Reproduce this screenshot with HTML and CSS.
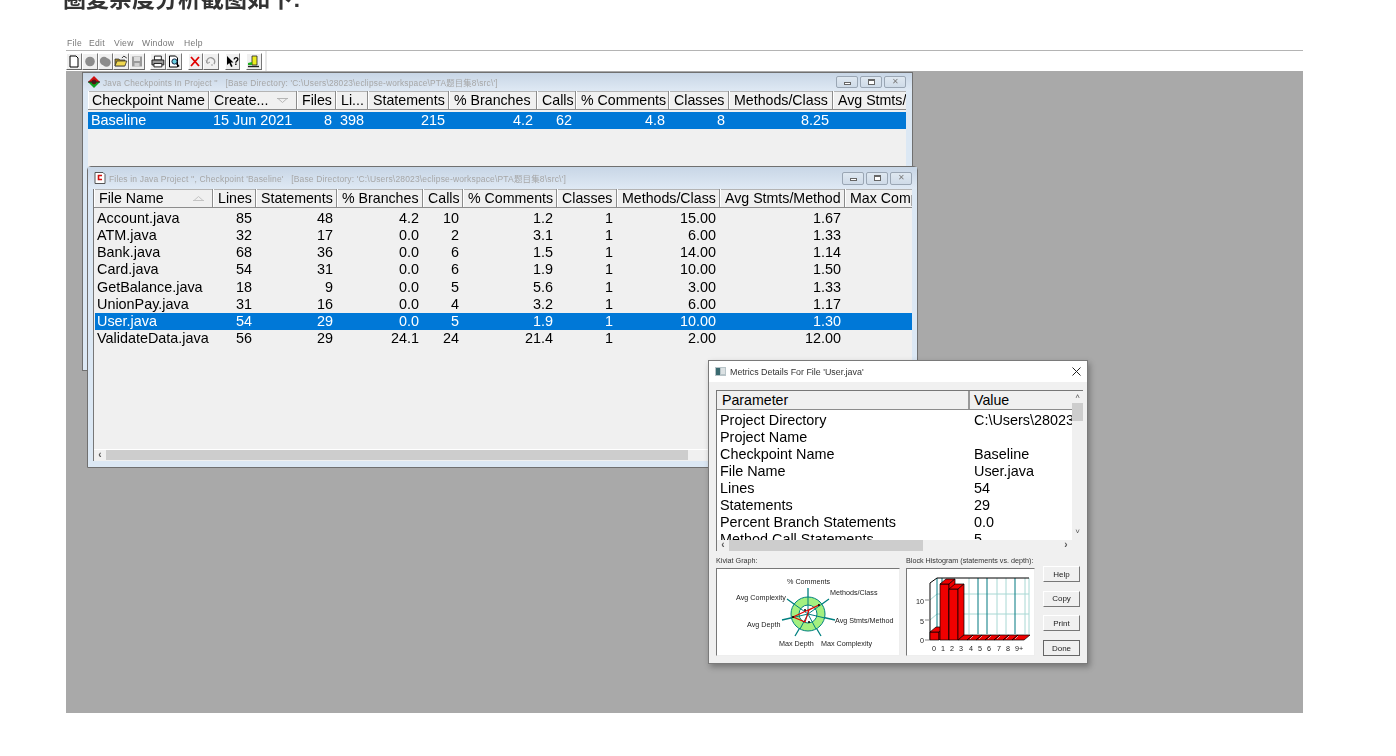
FILE: index.html
```html
<!DOCTYPE html>
<html lang="zh">
<head>
<meta charset="utf-8">
<title>圈复杂度分析</title>
<link rel="stylesheet" href="styles.css">
</head>
<body>
<main class="article">
  <h2 class="heading">圈复杂度分析截图如下:</h2>
  <figure class="shot">
    <nav class="menubar"><span>File</span><span>Edit</span><span>View</span><span>Window</span><span>Help</span></nav>
    <div class="toolbar">
      <div class="tgroup">
        <span class="tbtn"><svg viewBox="0 0 12 13" width="12" height="13"><path d="M2 1h6l2 2v9H2z" fill="#fff" stroke="#000"/></svg></span>
        <span class="tbtn"><svg viewBox="0 0 12 13" width="12" height="13"><circle cx="6" cy="6.5" r="4.8" fill="#8c8c8c"/></svg></span>
        <span class="tbtn"><svg viewBox="0 0 12 13" width="12" height="13"><circle cx="5" cy="6" r="4.2" fill="#8c8c8c"/><circle cx="7.5" cy="7.5" r="4.2" fill="#8c8c8c"/></svg></span>
        <span class="tbtn"><svg viewBox="0 0 14 13" width="14" height="13"><path d="M1 4h4l1 1h5v6H1z" fill="#a88a20" stroke="#333" stroke-width=".8"/><path d="M3 6h10l-2 5H1z" fill="#f0d850" stroke="#333" stroke-width=".8"/><path d="M8 3l2-2 3 2" fill="none" stroke="#333"/></svg></span>
        <span class="tbtn"><svg viewBox="0 0 12 13" width="12" height="13"><path d="M1 1.5h10v10H1z" fill="#9a9a9a"/><path d="M3 2h6v4H3z" fill="#dcdcdc"/><path d="M3.500 8h5v3.500h-5z" fill="#d0d0d0"/></svg></span>
      </div>
      <div class="tgroup">
        <span class="tbtn"><svg viewBox="0 0 14 13" width="14" height="13"><path d="M3.500 1h7v4h-7z" fill="#fff" stroke="#222"/><path d="M1 5h12v5H1z" fill="#9c9c9c" stroke="#222"/><path d="M3 8.500h8V12H3z" fill="#fff" stroke="#222"/></svg></span>
        <span class="tbtn"><svg viewBox="0 0 12 13" width="12" height="13"><path d="M1.500 1h6l2 2v9h-8z" fill="#fff" stroke="#000"/><circle cx="6.500" cy="6.500" r="2.600" fill="#6ad0e0" stroke="#124"/><path d="M8.500 8.500l2.500 3" stroke="#000" stroke-width="1.400"/></svg></span>
      </div>
      <div class="tgroup">
        <span class="tbtn"><svg viewBox="0 0 12 13" width="12" height="13"><path d="M2 2l8 9M10 2l-8 9" stroke="#e00000" stroke-width="1.800"/></svg></span>
        <span class="tbtn"><svg viewBox="0 0 12 13" width="12" height="13"><path d="M2 8a4 4 0 1 1 7 1" fill="none" stroke="#9a9a9a" stroke-width="1.400"/><path d="M1 5.500l1.500 3 2.500-1.500" fill="none" stroke="#9a9a9a"/><circle cx="7" cy="10" r="1" fill="#bbb"/></svg></span>
      </div>
      <div class="tgroup">
        <span class="tbtn"><svg viewBox="0 0 13 13" width="13" height="13"><path d="M1 1v9l2.300-2 1.800 4 1.500-.7-1.800-3.800H7.500z" fill="#000"/><text x="7" y="10" class="help-q">?</text></svg></span>
      </div>
      <div class="tgroup">
        <span class="tbtn"><svg viewBox="0 0 13 13" width="13" height="13"><path d="M5 1h5v9H5z" fill="#ecec20" stroke="#222" stroke-width=".8"/><path d="M1 8l4-1v3H1z" fill="#20b020"/><path d="M1 11.500h11" stroke="#222" stroke-width="1.400"/></svg></span>
      </div>
      <span class="tend"></span>
    </div>

    <div class="desktop">
      <section class="win win-back">
        <header class="titlebar">
          <svg class="wicon" viewBox="0 0 12 12" width="12" height="12"><path d="M6 0l6 6H0z" fill="#d01010"/><path d="M0 6h12l-6 6z" fill="#10a020"/><circle cx="6" cy="6" r="2.400" fill="#601010"/><path d="M0 6h12" stroke="#222"/></svg>
          <span class="wtitle">Java Checkpoints In Project ''   [Base Directory: 'C:\Users\28023\eclipse-workspace\PTA题目集8\src\']</span>
          <span class="wbtns">
            <span class="wbtn"><i class="g-min"></i></span>
            <span class="wbtn"><i class="g-max"></i></span>
            <span class="wbtn g-close">✕</span>
          </span>
        </header>
        <div class="list list-back">
          <div class="hdr cols-back">
            <span class="h">Checkpoint Name</span>
            <span class="h h-sort">Create...<svg viewBox="0 0 11 5" width="11" height="5"><path d="M0 .5h11M1 .5l4.500 4 4.500-4" fill="none" stroke="#b5b5b5"/></svg></span>
            <span class="h">Files</span><span class="h">Li...</span><span class="h">Statements</span><span class="h">% Branches</span><span class="h">Calls</span><span class="h">% Comments</span><span class="h">Classes</span><span class="h">Methods/Class</span><span class="h h-clip">Avg Stmts/Method</span>
          </div>
          <div class="row sel cols-back">
            <span class="c l">Baseline</span><span class="c l">15 Jun 2021</span><span class="c">8</span><span class="c">398</span><span class="c">215</span><span class="c">4.2</span><span class="c">62</span><span class="c">4.8</span><span class="c">8</span><span class="c">8.25</span><span class="c"></span>
          </div>
        </div>
      </section>

      <section class="win win-front">
        <header class="titlebar">
          <svg class="wicon" viewBox="0 0 12 12" width="12" height="12"><path d="M1 .5h8l2 2v9H1z" fill="#fff" stroke="#555"/><path d="M8 3.500H4.500v4H8" fill="none" stroke="#d01010" stroke-width="1.600"/></svg>
          <span class="wtitle">Files in Java Project '', Checkpoint 'Baseline'   [Base Directory: 'C:\Users\28023\eclipse-workspace\PTA题目集8\src\']</span>
          <span class="wbtns">
            <span class="wbtn"><i class="g-min"></i></span>
            <span class="wbtn"><i class="g-max"></i></span>
            <span class="wbtn g-close">✕</span>
          </span>
        </header>
        <div class="list list-front">
          <div class="hdr cols-front">
            <span class="h h-sort">File Name<svg viewBox="0 0 11 5" width="11" height="5"><path d="M0 4.500h11M1 4.500l4.500-4 4.500 4" fill="none" stroke="#c4c4c4"/></svg></span>
            <span class="h">Lines</span><span class="h">Statements</span><span class="h">% Branches</span><span class="h">Calls</span><span class="h">% Comments</span><span class="h">Classes</span><span class="h">Methods/Class</span><span class="h">Avg Stmts/Method</span><span class="h h-clip">Max Complexity</span>
          </div>
          <div class="rows">
            <div class="row cols-front"><span class="c l">Account.java</span><span class="c">85</span><span class="c">48</span><span class="c">4.2</span><span class="c">10</span><span class="c">1.2</span><span class="c">1</span><span class="c">15.00</span><span class="c">1.67</span><span class="c"></span></div>
            <div class="row cols-front"><span class="c l">ATM.java</span><span class="c">32</span><span class="c">17</span><span class="c">0.0</span><span class="c">2</span><span class="c">3.1</span><span class="c">1</span><span class="c">6.00</span><span class="c">1.33</span><span class="c"></span></div>
            <div class="row cols-front"><span class="c l">Bank.java</span><span class="c">68</span><span class="c">36</span><span class="c">0.0</span><span class="c">6</span><span class="c">1.5</span><span class="c">1</span><span class="c">14.00</span><span class="c">1.14</span><span class="c"></span></div>
            <div class="row cols-front"><span class="c l">Card.java</span><span class="c">54</span><span class="c">31</span><span class="c">0.0</span><span class="c">6</span><span class="c">1.9</span><span class="c">1</span><span class="c">10.00</span><span class="c">1.50</span><span class="c"></span></div>
            <div class="row cols-front"><span class="c l">GetBalance.java</span><span class="c">18</span><span class="c">9</span><span class="c">0.0</span><span class="c">5</span><span class="c">5.6</span><span class="c">1</span><span class="c">3.00</span><span class="c">1.33</span><span class="c"></span></div>
            <div class="row cols-front"><span class="c l">UnionPay.java</span><span class="c">31</span><span class="c">16</span><span class="c">0.0</span><span class="c">4</span><span class="c">3.2</span><span class="c">1</span><span class="c">6.00</span><span class="c">1.17</span><span class="c"></span></div>
            <div class="row sel cols-front"><span class="c l">User.java</span><span class="c">54</span><span class="c">29</span><span class="c">0.0</span><span class="c">5</span><span class="c">1.9</span><span class="c">1</span><span class="c">10.00</span><span class="c">1.30</span><span class="c"></span></div>
            <div class="row cols-front"><span class="c l">ValidateData.java</span><span class="c">56</span><span class="c">29</span><span class="c">24.1</span><span class="c">24</span><span class="c">21.4</span><span class="c">1</span><span class="c">2.00</span><span class="c">12.00</span><span class="c"></span></div>
          </div>
          <div class="hscroll"><span class="sarrow">‹</span><span class="sthumb"></span></div>
        </div>
      </section>

      <section class="dialog">
        <header class="dtitle">
          <svg viewBox="0 0 11 9" width="11" height="9"><path d="M0 0h11v9H0z" fill="#b8c4c8"/><path d="M1 1h4v7H1z" fill="#3a6a70"/><path d="M6 2h4M6 4h4M6 6h4" stroke="#fff"/></svg>
          <span class="dname">Metrics Details For File 'User.java'</span>
          <svg class="dclose" viewBox="0 0 9 9" width="9" height="9"><path d="M.5.500l8 8M8.500.500l-8 8" stroke="#222"/></svg>
        </header>
        <div class="dbody">
          <div class="dlist">
            <div class="dmain">
              <div class="dhdr"><span>Parameter</span><span>Value</span></div>
              <div class="drows">
                <div class="drow"><span>Project Directory</span><span>C:\Users\28023\eclipse-workspace</span></div>
                <div class="drow"><span>Project Name</span><span></span></div>
                <div class="drow"><span>Checkpoint Name</span><span>Baseline</span></div>
                <div class="drow"><span>File Name</span><span>User.java</span></div>
                <div class="drow"><span>Lines</span><span>54</span></div>
                <div class="drow"><span>Statements</span><span>29</span></div>
                <div class="drow"><span>Percent Branch Statements</span><span>0.0</span></div>
                <div class="drow"><span>Method Call Statements</span><span>5</span></div>
              </div>
            </div>
            <div class="dvbar"><span class="varrow">˄</span><span class="vthumb"></span><span class="varrow vdown">˅</span></div>
            <div class="dhbar"><span class="sarrow">‹</span><span class="dhthumb"></span><span class="sarrow sright">›</span></div>
          </div>
          <div class="dcharts">
            <div class="chart">
              <div class="clabel">Kiviat Graph:</div>
              <div class="cbox kiviat">
                <svg viewBox="0 0 183 87" width="183" height="87">
                  <g stroke="#008080" stroke-width="1.300">
                    <path d="M91 45V19M91 45l21-15M91 45l27 6M91 45l13 22M91 45L78 67M91 45l-26 6M91 45L70 30"/>
                  </g>
                  <circle cx="91" cy="45" r="17" fill="#a4f080" stroke="#008080"/>
                  <circle cx="91" cy="45" r="9" fill="#fff" stroke="#008080"/>
                  <path d="M91 45V28M91 45l14-10M91 45l17 4M91 45l8 15M91 45l-8 15M91 45l-17 4M91 45L77 35" stroke="#008080"/>
                  <path d="M102 36L76 48l12 5 4-12z" fill="none" stroke="#e00000" stroke-width="1.100"/>
                  <g fill="#000"><circle cx="102" cy="36" r="1"/><circle cx="88" cy="41" r="1"/><circle cx="92" cy="53" r="1"/><circle cx="76" cy="48" r="1"/></g>
                  <g class="ktext">
                    <text x="70" y="15">% Comments</text>
                    <text x="113" y="26">Methods/Class</text>
                    <text x="19" y="31">Avg Complexity</text>
                    <text x="118" y="54">Avg Stmts/Method</text>
                    <text x="30" y="58">Avg Depth</text>
                    <text x="62" y="77">Max Depth</text>
                    <text x="104" y="77">Max Complexity</text>
                  </g>
                </svg>
              </div>
            </div>
            <div class="chart">
              <div class="clabel">Block Histogram (statements vs. depth):</div>
              <div class="cbox histo">
                <svg viewBox="0 0 128 87" width="128" height="87">
                  <path d="M30 9h92v56H30z" fill="#fff"/>
                  <g stroke="#a8d8d4" fill="none">
                    <path d="M30 25h92M30 45h92M23 31l7-6M23 51l7-6M62 9v56M90 9v56M99 9v56M122 9v56M118 9v56"/>
                  </g>
                  <g stroke="#007880" fill="none">
                    <path d="M30 9v56M35 9v56M71 9v56M80 9v56M108 9v56"/>
                  </g>
                  <path d="M23 71V14l7-5h92" fill="none" stroke="#000"/>
                  <path d="M18 31h5M18 51h5M18 71h5" stroke="#888"/>
                  <g fill="#f00000" stroke="#000" stroke-width=".7">
                    <path d="M23 63h9v8h-9z"/><path d="M23 63l6-5h9l-6 5z"/><path d="M32 63l6-5v8l-6 5z"/>
                    <path d="M33 15h9v56h-9z"/><path d="M33 15l6-5h9l-6 5z"/><path d="M42 15l6-5v56l-6 5z"/>
                    <path d="M42 20h9v51h-9z"/><path d="M42 20l6-5h9l-6 5z"/><path d="M51 20l6-5v51l-6 5z"/>
                    <path d="M51 71l6-5h66l-6 5z"/>
                  </g>
                  <path d="M60 71l6-5M69 71l6-5M78 71l6-5M87 71l6-5M96 71l6-5M105 71l6-5" stroke="#000"/>
                  <path d="M63 70l3-3M72 70l3-3M81 70l3-3M90 70l3-3M99 70l3-3M108 70l3-3" stroke="#fff" stroke-width=".6"/>
                  <g class="ktext">
                    <text x="9" y="35">10</text><text x="13" y="55">5</text><text x="13" y="74">0</text>
                    <text x="25" y="82">0</text><text x="34" y="82">1</text><text x="43" y="82">2</text><text x="52" y="82">3</text><text x="62" y="82">4</text><text x="71" y="82">5</text><text x="80" y="82">6</text><text x="90" y="82">7</text><text x="99" y="82">8</text><text x="108" y="82">9+</text>
                  </g>
                </svg>
              </div>
            </div>
            <div class="dbtns">
              <span class="pbtn">Help</span><span class="pbtn">Copy</span><span class="pbtn">Print</span><span class="pbtn pbtn-def">Done</span>
            </div>
          </div>
        </div>
      </section>
    </div>
  </figure>
</main>
</body>
</html>
```
FILE: styles.css
```css
* { box-sizing: border-box; }
html, body { margin: 0; height: 756px; overflow: hidden; background: #fff; }
body { font-family: "Liberation Sans", "Noto Sans CJK SC", sans-serif; color: #000; }

.article { padding-left: 63px; }
.heading {
  margin: -14px 0 24px;
  height: 26px;
  font-size: 23px;
  line-height: 26px;
  font-weight: 700;
  color: #333;
  font-family: "Liberation Sans", "Noto Sans CJK SC", sans-serif;
  filter: blur(0.3px);
}

.shot { margin: 0 0 0 3px; width: 1237px; filter: blur(0.35px); }

.menubar {
  display: flex;
  height: 15px;
  padding-left: 1px;
  border-bottom: 1px solid #b4b4b4;
  font-size: 8.6px;
  line-height: 14px;
  color: #777;
  letter-spacing: .3px;
}
.menubar span:nth-child(1) { width: 22px; }
.menubar span:nth-child(2) { width: 25px; }
.menubar span:nth-child(3) { width: 28px; }
.menubar span:nth-child(4) { width: 42px; }

.toolbar { display: flex; height: 20px; padding: 2px 0 1px; gap: 5.5px; background: #fff; }
.tgroup { display: flex; }
.tbtn {
  display: flex;
  align-items: center;
  justify-content: center;
  width: 15.8px;
  height: 17px;
  background: #f0f0f0;
  border: 1px solid;
  border-color: #fff #777 #666 #fff;
}
.tend { width: 0; height: 20px; margin: -2px 0 0 -2px; border-left: 2px solid #e8e8e8; }
.help-q { font: 700 10px "Liberation Sans", sans-serif; fill: #000; }

.desktop { position: relative; height: 642px; background: #a9a9a9; overflow: hidden; }

.win {
  position: absolute;
  width: 831px;
  display: flex;
  flex-direction: column;
  background: #dce8f4;
  border: 1px solid #707070;
}
.win-back { left: 16px; top: 1px; height: 299px; padding: 0 6px 0 5px; }
.win-front { left: 21px; top: 95px; height: 302px; padding: 0 5px 6px 5px; border-radius: 4px 4px 0 0; }

.titlebar {
  display: flex;
  align-items: center;
  gap: 3px;
  height: 18px;
  flex: none;
  margin: 0 -6px 0 -5px;
  padding: 0 6px 0 5px;
  background: linear-gradient(#c8d6e6, #dfe9f4);
}
.win-front .titlebar { height: 22px; margin-right: -5px; padding-right: 5px; padding-left: 6px; }
.wtitle { flex: 1; font-size: 8.5px; color: #a6a6a6; white-space: pre; letter-spacing: .16px; overflow: hidden; }
.win-back .wtitle { font-size: 8.3px; letter-spacing: .22px; }
.wbtns { display: flex; gap: 2px; }
.wbtn {
  display: flex;
  align-items: center;
  justify-content: center;
  width: 22px;
  height: 12px;
  border: 1px solid #9aa6b4;
  border-radius: 2px;
  background: linear-gradient(#dfe8f1, #cfdbe8);
  font-size: 8px;
  line-height: 1;
  color: #7c7c7c;
}
.win-front .wbtn { height: 13px; }
.g-min { display: block; width: 7px; height: 3px; margin-top: 3px; border: 1px solid #666; background: #fff; }
.g-max { display: block; width: 7px; height: 6px; border: 1px solid #666; border-top-width: 2px; background: #fff; }

.list { flex: 1; min-height: 0; background: #f0f0f0; overflow: hidden; display: flex; flex-direction: column; }
.list-front { border-left: 1px solid #777; }
.cols-back { grid-template-columns: 121px 88px 39px 32px 81px 88px 39px 93px 60px 104px 73px; }
.cols-front { grid-template-columns: 119px 43px 81px 86px 40px 94px 60px 103px 125px 67px; }

.hdr { display: grid; height: 19px; flex: none; }
.h {
  display: flex;
  align-items: center;
  justify-content: space-between;
  padding-left: 5px;
  font-size: 14.2px;
  line-height: 18px;
  white-space: nowrap;
  overflow: hidden;
  background: #f0f0f0;
  border-right: 1px solid #8c8c8c;
  border-bottom: 1px solid #8c8c8c;
  box-shadow: inset 1px 0 0 #fff, inset 0 1px 0 #b4b4b4;
}
.list-back .h:first-child { padding-left: 4px; }
.h svg { flex: none; margin-right: 8px; }
.h-clip { border-right: 0; display: block; }

.list-back .hdr { margin-bottom: 2px; }
.rows { flex: 1; min-height: 0; padding-top: 2px; }
.row { display: grid; height: 17.15px; font-size: 14.4px; line-height: 17px; }
.list-front .row { margin-left: 1px; }
.list-front .row .c:first-child { margin-right: 1px; }
.list-back .row { height: 17px; }
.sel { background: #0078d7; color: #fff; }
.c { padding-right: 4px; text-align: right; white-space: nowrap; overflow: hidden; }
.list-front .c { padding-right: 5px; }
.c.l { text-align: left; padding-left: 2px; }
.list-back .c.l { padding-left: 3px; }
.list-back .c.l:nth-child(2) { padding-left: 4px; }

.hscroll { display: flex; height: 10px; flex: none; margin-bottom: 1px; background: #f0f0f0; box-shadow: 0 -1px 0 #fff; }
.sarrow { width: 12px; font-size: 10px; line-height: 9px; text-align: center; color: #555; font-weight: 700; flex: none; }
.sthumb { width: 582px; background: #cdcdcd; }

.dialog {
  position: absolute;
  left: 642px;
  top: 289px;
  width: 380px;
  height: 304px;
  display: flex;
  flex-direction: column;
  background: #f0f0f0;
  border: 1px solid #7a7a7a;
  box-shadow: 2px 3px 6px rgba(0, 0, 0, .3);
}
.dtitle { display: flex; align-items: center; height: 21px; flex: none; padding: 0 6px; background: #fff; }
.dname { flex: 1; margin-left: 4px; font-size: 8.9px; color: #333; white-space: nowrap; }
.dbody { flex: 1; min-height: 0; padding: 8px 4px 0 7px; }
.dlist {
  display: grid;
  grid-template-columns: 355px 11px;
  grid-template-rows: 149px 11px;
  width: 367px;
  border-top: 1px solid #777;
  border-left: 1px solid #777;
}
.dmain { overflow: hidden; background: #fff; }
.dhdr {
  display: grid;
  grid-template-columns: 253px 1fr;
  height: 19px;
  font-size: 14.2px;
  line-height: 18px;
  background: #f0f0f0;
  border-bottom: 1px solid #8c8c8c;
}
.dhdr span { padding-left: 5px; }
.dhdr span:last-child { padding-left: 4px; }
.dhdr span:first-child { border-right: 2px solid #999; }
.drows { padding-top: 1.5px; }
.drow {
  display: grid;
  grid-template-columns: 253px 1fr;
  height: 17.15px;
  font-size: 14.4px;
  line-height: 17px;
  white-space: nowrap;
  overflow: hidden;
}
.drow span { padding-left: 3px; overflow: hidden; }
.drow span:last-child { padding-left: 4px; }
.dvbar { display: flex; flex-direction: column; background: #f0f0f0; }
.varrow { height: 12px; font-size: 8px; line-height: 12px; text-align: center; color: #555; }
.vthumb { height: 18px; background: #cdcdcd; }
.vdown { margin-top: auto; height: 14px; }
.dhbar { display: flex; background: #f0f0f0; }
.dhthumb { width: 194px; background: #cdcdcd; }
.sright { margin-left: auto; }

.dcharts { display: flex; margin-top: 4px; }
.chart { display: flex; flex-direction: column; margin-right: 6px; }
.clabel { height: 13px; font-size: 7.2px; line-height: 11px; color: #333; white-space: nowrap; }
.cbox {
  height: 88px;
  background: #fff;
  border: 1px solid;
  border-color: #777 #eee #eee #777;
  overflow: hidden;
}
.cbox svg { display: block; }
.kiviat { width: 184px; }
.histo { width: 129px; }
.ktext text { font: 7.2px "Liberation Sans", sans-serif; fill: #222; }

.dbtns { display: flex; flex-direction: column; gap: 8.7px; margin: 11px 0 0 2px; }
.pbtn {
  display: flex;
  align-items: center;
  justify-content: center;
  width: 37px;
  height: 16px;
  font-size: 8px;
  color: #222;
  background: #f0f0f0;
  border: 1px solid;
  border-color: #fff #777 #777 #fff;
}
.pbtn-def { border-color: #666; }
```
